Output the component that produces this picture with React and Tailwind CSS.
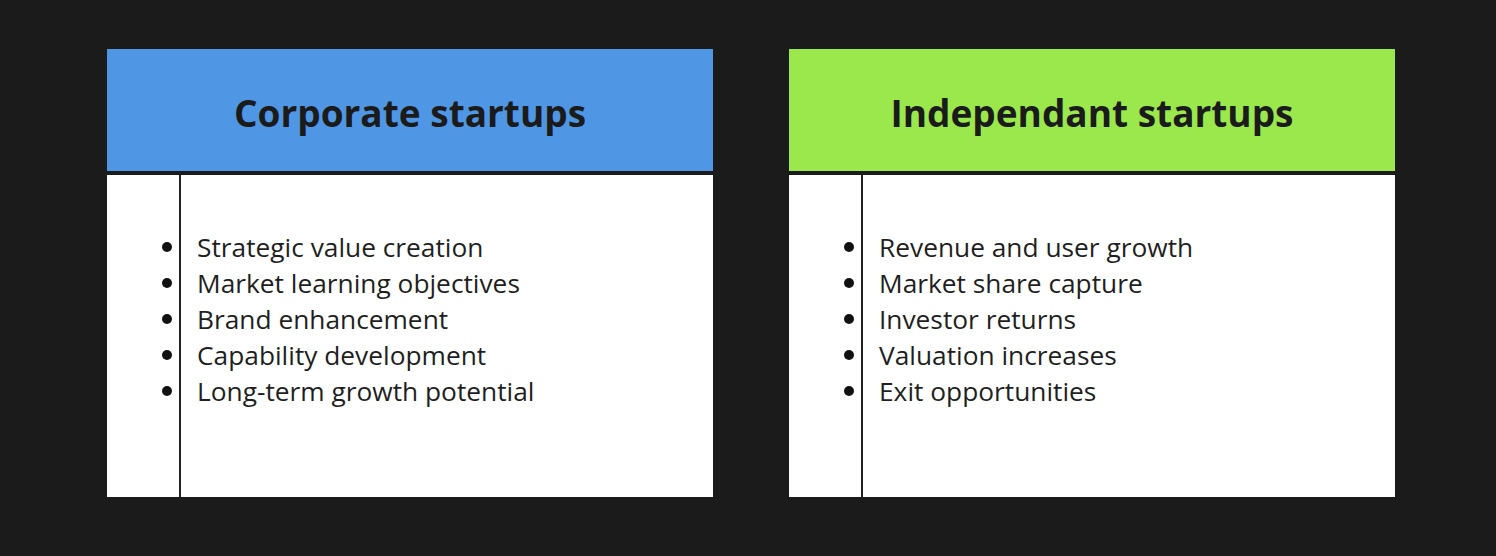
import React from "react";

const cards = [
  {
    title: "Corporate startups",
    color: "bg-[#4f97e5]",
    items: [
      "Strategic value creation",
      "Market learning objectives",
      "Brand enhancement",
      "Capability development",
      "Long-term growth potential",
    ],
  },
  {
    title: "Independant startups",
    color: "bg-[#9ae84c]",
    items: [
      "Revenue and user growth",
      "Market share capture",
      "Investor returns",
      "Valuation increases",
      "Exit opportunities",
    ],
  },
];

function Card({ title, color, items }) {
  return (
    <div className="w-[606px] flex flex-col">
      <div
        className={`${color} h-[118px] flex items-center justify-center border-b-4 border-[#1b1b1b] box-content pt-[4px]`}
      >
        <h2 className="text-[37px] font-bold text-[#1b1b1b] leading-none">{title}</h2>
      </div>
      <div className="bg-white h-[322px] flex">
        <div className="w-[74px] border-r-2 border-[#222] flex flex-col items-end pt-[54px] pr-[7px]">
          {items.map((it) => (
            <div key={it} className="h-[36px] flex items-center">
              <span className="block w-[10px] h-[10px] rounded-full bg-[#111]" />
            </div>
          ))}
        </div>
        <ul className="pt-[54px] pl-[16px]">
          {items.map((it) => (
            <li key={it} className="h-[36px] leading-[36px] text-[26.3px] text-[#1f1f1f]">
              {it}
            </li>
          ))}
        </ul>
      </div>
    </div>
  );
}

export default function App() {
  return (
    <div
      className="w-[1496px] h-[556px] bg-[#1b1b1b] flex gap-[76px] pl-[107px] pt-[49px]"
      style={{ fontFamily: '"Open Sans", sans-serif' }}
    >
      {cards.map((c) => (
        <Card key={c.title} {...c} />
      ))}
    </div>
  );
}
